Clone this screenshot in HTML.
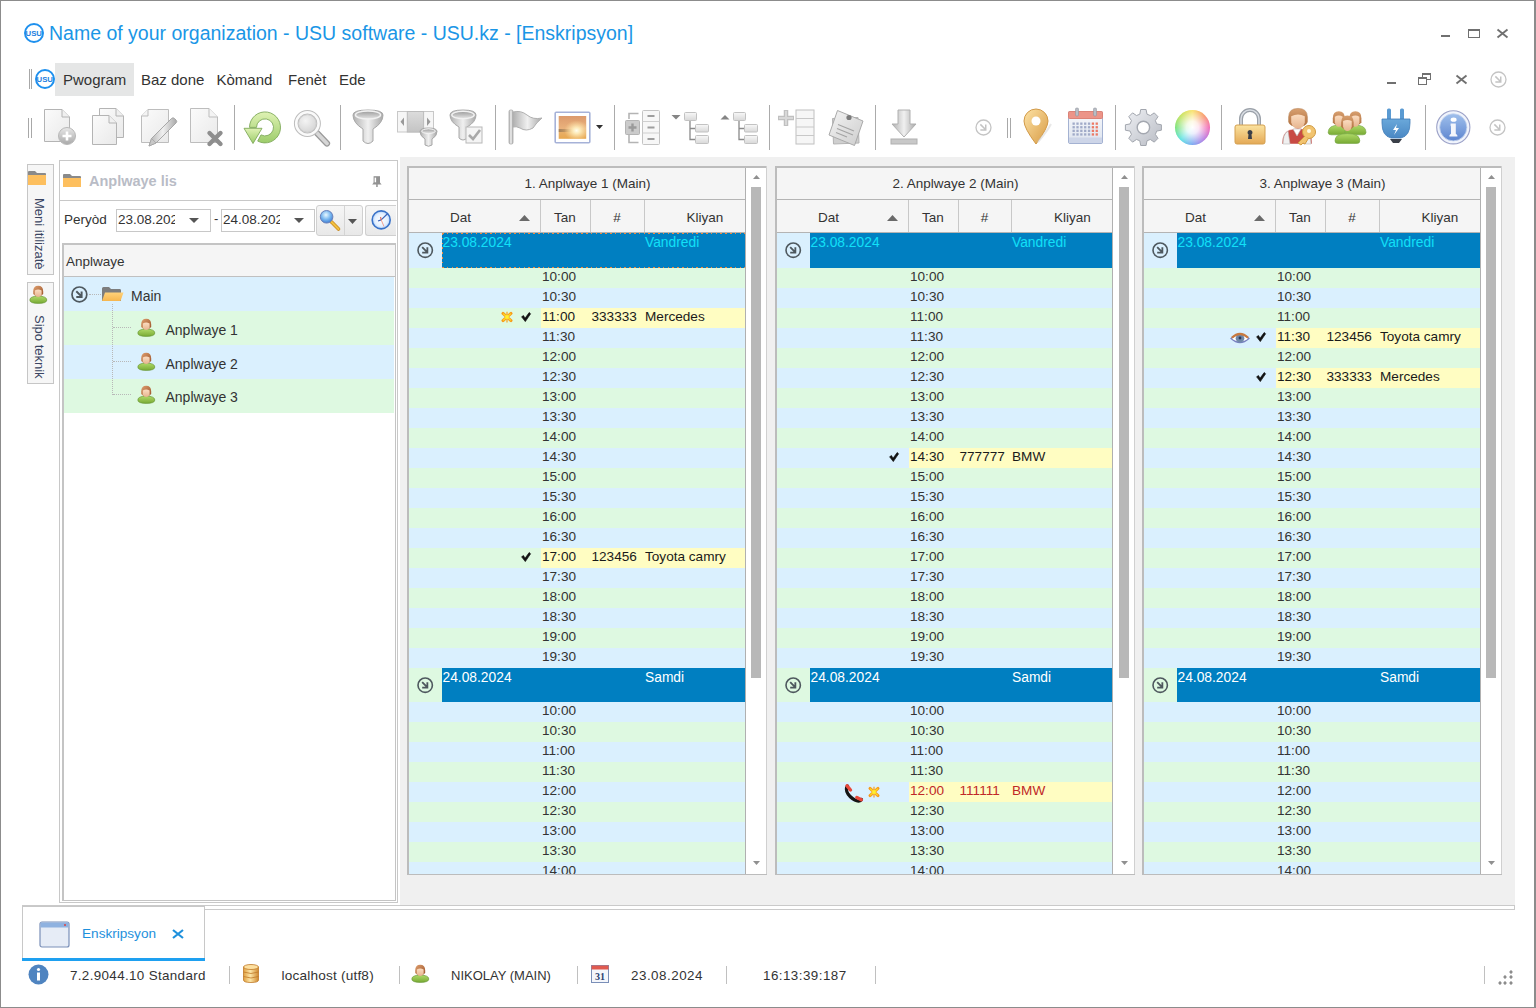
<!DOCTYPE html><html><head><meta charset="utf-8"><style>
*{box-sizing:border-box;margin:0;padding:0}
html,body{width:1536px;height:1008px;overflow:hidden;background:#fff;font-family:"Liberation Sans",sans-serif;color:#333}
.a{position:absolute}
.t{position:absolute;white-space:nowrap;line-height:1}
svg{position:absolute;overflow:visible}
</style></head><body><div class="a" style="left:0;top:0;width:1536px;height:1008px;border:1px solid #8c8c8c;border-right:2px solid #8c8c8c"></div>
<svg style="left:23.8px;top:22.5px" width="20" height="20" viewBox="0 0 20 20"><circle cx="10" cy="10" r="9" fill="none" stroke="#1e90ee" stroke-width="2"/><text x="1.6" y="12.6" font-size="7.2" font-weight="bold" textLength="16.4" lengthAdjust="spacingAndGlyphs" fill="#1e80e0" font-family="Liberation Sans">USU</text></svg>
<div class="t" style="left:49px;top:24px;font-size:19.5px;letter-spacing:0px;color:#1a96e6">Name of your organization - USU software - USU.kz - [Enskripsyon]</div>
<div class="a" style="left:1441px;top:35px;width:9px;height:2px;background:#707070"></div>
<div class="a" style="left:1468px;top:29px;width:12px;height:9px;border:1px solid #707070;border-top-width:2px"></div>
<svg style="left:1497px;top:29px" width="11" height="9" viewBox="0 0 11 9"><path d="M0.5 0.5L10.5 8.5M10.5 0.5L0.5 8.5" stroke="#707070" stroke-width="1.9"/></svg>
<div class="a" style="left:29px;top:69px;width:1px;height:20px;background:#a8a8a8"></div>
<div class="a" style="left:31px;top:69px;width:1px;height:20px;background:#a8a8a8"></div>
<div class="a" style="left:55px;top:63px;width:79px;height:33px;background:#e5e6e6"></div>
<svg style="left:35px;top:69px" width="20" height="20" viewBox="0 0 20 20"><circle cx="10" cy="10" r="9" fill="none" stroke="#1e90ee" stroke-width="2"/><text x="1.6" y="12.6" font-size="7.2" font-weight="bold" textLength="16.4" lengthAdjust="spacingAndGlyphs" fill="#1e80e0" font-family="Liberation Sans">USU</text></svg>
<div class="t" style="left:63px;top:72px;font-size:15px;color:#333">Pwogram</div>
<div class="t" style="left:141px;top:72px;font-size:15px;color:#333">Baz done</div>
<div class="t" style="left:216.5px;top:72px;font-size:15px;color:#333">Kòmand</div>
<div class="t" style="left:288px;top:72px;font-size:15px;color:#333">Fenèt</div>
<div class="t" style="left:339px;top:72px;font-size:15px;color:#333">Ede</div>
<div class="a" style="left:1387px;top:82px;width:9px;height:2px;background:#707070"></div>
<svg style="left:1418px;top:73px" width="14" height="12" viewBox="0 0 14 12"><rect x="4.5" y="0.5" width="8" height="6" fill="#fff" stroke="#707070" stroke-width="1"/><rect x="4.5" y="0.5" width="8" height="1.5" fill="#707070"/><rect x="0.5" y="4.5" width="8" height="7" fill="#fff" stroke="#707070" stroke-width="1"/><rect x="0.5" y="4.5" width="8" height="1.5" fill="#707070"/></svg>
<svg style="left:1456px;top:75px" width="11" height="9" viewBox="0 0 11 9"><path d="M0.5 0.5L10.5 8.5M10.5 0.5L0.5 8.5" stroke="#707070" stroke-width="1.9"/></svg>
<svg style="left:1488.5px;top:70.0px" width="19.0" height="19.0" viewBox="-9.5 -9.5 19.0 19.0"><circle cx="0" cy="0" r="7.5" fill="none" stroke="#c4c4c4" stroke-width="1.3"/><path d="M-3.15 -3.15L2.03 2.03M2.25 -3.00V2.55H-3.15" fill="none" stroke="#c4c4c4" stroke-width="1.49"/></svg>
<div class="a" style="left:28px;top:118px;width:1px;height:20px;background:#a8a8a8"></div>
<div class="a" style="left:31px;top:118px;width:1px;height:20px;background:#a8a8a8"></div>
<div class="a" style="left:234px;top:105px;width:1px;height:45px;background:#ababab"></div>
<div class="a" style="left:340px;top:105px;width:1px;height:45px;background:#ababab"></div>
<div class="a" style="left:495px;top:105px;width:1px;height:45px;background:#ababab"></div>
<div class="a" style="left:614px;top:105px;width:1px;height:45px;background:#ababab"></div>
<div class="a" style="left:769px;top:105px;width:1px;height:45px;background:#ababab"></div>
<div class="a" style="left:875px;top:105px;width:1px;height:45px;background:#ababab"></div>
<div class="a" style="left:1115px;top:105px;width:1px;height:45px;background:#ababab"></div>
<div class="a" style="left:1221px;top:105px;width:1px;height:45px;background:#ababab"></div>
<div class="a" style="left:1425px;top:105px;width:1px;height:45px;background:#ababab"></div>
<svg width="0" height="0" style="position:absolute"><defs>
<linearGradient id="gpage" x1="0" y1="0" x2="1" y2="1"><stop offset="0" stop-color="#fbfbfb"/><stop offset="1" stop-color="#e9e9e9"/></linearGradient>
<linearGradient id="ggray" x1="0" y1="0" x2="0" y2="1"><stop offset="0" stop-color="#e8e8e8"/><stop offset="1" stop-color="#a9a9a9"/></linearGradient>
<linearGradient id="ggray2" x1="0" y1="0" x2="1" y2="0"><stop offset="0" stop-color="#b0b0b0"/><stop offset="0.5" stop-color="#f0f0f0"/><stop offset="1" stop-color="#a8a8a8"/></linearGradient>
<linearGradient id="ggreen" x1="0" y1="0" x2="0" y2="1"><stop offset="0" stop-color="#dff2b4"/><stop offset="1" stop-color="#9ccc6a"/></linearGradient>
<linearGradient id="gsun" x1="0" y1="0" x2="0" y2="1"><stop offset="0" stop-color="#d9905a"/><stop offset="0.6" stop-color="#f5c48a"/><stop offset="1" stop-color="#b88a5a"/></linearGradient>
<radialGradient id="gsunc" cx="0.55" cy="0.7" r="0.35"><stop offset="0" stop-color="#fffbe8"/><stop offset="1" stop-color="#fffbe8" stop-opacity="0"/></radialGradient>
<linearGradient id="gpin" x1="0" y1="0" x2="1" y2="1"><stop offset="0" stop-color="#fde3a6"/><stop offset="1" stop-color="#d89b45"/></linearGradient>
<linearGradient id="ggear" x1="0" y1="0" x2="1" y2="1"><stop offset="0" stop-color="#eef0f4"/><stop offset="1" stop-color="#b9bcc4"/></linearGradient>
<linearGradient id="glock" x1="0" y1="0" x2="0" y2="1"><stop offset="0" stop-color="#fbe3a0"/><stop offset="1" stop-color="#e4a956"/></linearGradient>
<linearGradient id="ginfo" x1="0" y1="0" x2="0" y2="1"><stop offset="0" stop-color="#a0c0ec"/><stop offset="1" stop-color="#5e86d0"/></linearGradient>
<linearGradient id="gskin" x1="0" y1="0" x2="0" y2="1"><stop offset="0" stop-color="#fbdcc0"/><stop offset="1" stop-color="#e6b48e"/></linearGradient>
<linearGradient id="gshirt" x1="0" y1="0" x2="0" y2="1"><stop offset="0" stop-color="#b0da68"/><stop offset="1" stop-color="#78aa34"/></linearGradient>
<linearGradient id="gcal" x1="0" y1="0" x2="0" y2="1"><stop offset="0" stop-color="#f8f9fc"/><stop offset="1" stop-color="#dde3ee"/></linearGradient>
<linearGradient id="gplug" x1="0" y1="0" x2="0" y2="1"><stop offset="0" stop-color="#6aa8da"/><stop offset="1" stop-color="#4a88c4"/></linearGradient>
<linearGradient id="gfold" x1="0" y1="0" x2="0" y2="1"><stop offset="0" stop-color="#ffd27a"/><stop offset="1" stop-color="#f6b64e"/></linearGradient>
<linearGradient id="gbox" x1="0" y1="0" x2="0" y2="1"><stop offset="0" stop-color="#f8f8f8"/><stop offset="1" stop-color="#d8d8d8"/></linearGradient>
<linearGradient id="gnote" x1="0" y1="0" x2="1" y2="1"><stop offset="0" stop-color="#f4f4f4"/><stop offset="1" stop-color="#cdcdcd"/></linearGradient>
<linearGradient id="ghair" x1="0" y1="0" x2="1" y2="1"><stop offset="0" stop-color="#e0a070"/><stop offset="1" stop-color="#9a5228"/></linearGradient>
<radialGradient id="glens" cx="0.4" cy="0.35" r="0.7"><stop offset="0" stop-color="#f4f4f4"/><stop offset="1" stop-color="#d4d4d4"/></radialGradient>
<linearGradient id="gcup" x1="0" y1="0" x2="0" y2="1"><stop offset="0" stop-color="#9c9c9c"/><stop offset="1" stop-color="#e6e6e6"/></linearGradient><linearGradient id="gcol" x1="0" y1="0" x2="0" y2="1"><stop offset="0" stop-color="#dcdcdc"/><stop offset="1" stop-color="#c4c4c4"/></linearGradient>
<linearGradient id="ghair2" x1="0" y1="0" x2="0" y2="1"><stop offset="0" stop-color="#d8a070"/><stop offset="1" stop-color="#b07040"/></linearGradient>
</defs></svg>
<svg style="left:43px;top:108px" width="34" height="38" viewBox="0 0 34 38"><path d="M1.5 1.5H19L26.5 9V33.5H1.5Z" fill="url(#gpage)" stroke="#b4b4b4" stroke-width="1"/><path d="M19 1.5V9H26.5" fill="#f0f0f0" stroke="#b4b4b4" stroke-width="1"/><circle cx="24" cy="28" r="8.5" fill="url(#ggray)" stroke="#b8b8b8"/><path d="M24 23.5V32.5M19.5 28H28.5" stroke="#fff" stroke-width="2.6"/></svg>
<svg style="left:91px;top:108px" width="34" height="38" viewBox="0 0 34 38"><path d="M8.5 0.5H25L32.5 8V29.5H8.5Z" fill="url(#gpage)" stroke="#b4b4b4" stroke-width="1"/><path d="M25 0.5V8H32.5" fill="#f0f0f0" stroke="#b4b4b4" stroke-width="1"/><path d="M1.5 7.5H18L25.5 15V36.5H1.5Z" fill="url(#gpage)" stroke="#b4b4b4" stroke-width="1"/><path d="M18 7.5V15H25.5" fill="#f0f0f0" stroke="#b4b4b4" stroke-width="1"/></svg>
<svg style="left:140px;top:108px" width="36" height="40" viewBox="0 0 36 40"><path d="M1.5 8L8 1.5H28.5V34.5H1.5Z" fill="url(#gpage)" stroke="#bdbdbd" stroke-width="1"/><path d="M8 1.5V8H1.5" fill="#f4f4f4" stroke="#bdbdbd" stroke-width="1"/><path d="M9 38L11.5 30.5L31.5 10.5Q33 9 34.5 10.5L36 12Q37.5 13.5 36 15L16 35Z" fill="url(#ggray2)" stroke="#a0a0a0" stroke-width="0.9"/><path d="M9 38L11.5 30.5L16 35Z" fill="#c8c8c8" stroke="#a0a0a0" stroke-width="0.7"/></svg>
<svg style="left:189px;top:107px" width="36" height="42" viewBox="0 0 36 42"><path d="M1.5 1.5H20L28.5 10V35.5H1.5Z" fill="url(#gpage)" stroke="#bdbdbd" stroke-width="1"/><path d="M20 1.5V10H28.5" fill="#f4f4f4" stroke="#bdbdbd" stroke-width="1"/><path d="M20.5 26L31.5 37M31.5 26L20.5 37" stroke="#8e8e8e" stroke-width="4.4" stroke-linecap="round"/></svg>
<svg style="left:243px;top:110px" width="40" height="36" viewBox="0 0 40 36"><path d="M6.5 17.4A15.5 15.5 0 1 1 14.7 31.1L18 24.9A8.5 8.5 0 1 0 13.5 17.4Z" fill="url(#ggreen)" stroke="#7fa95a" stroke-width="0.9"/><path d="M1 18.3L19 18.3L10 33.5Z" fill="url(#ggreen)" stroke="#7fa95a" stroke-width="0.9"/></svg>
<svg style="left:293px;top:108px" width="38" height="40" viewBox="0 0 38 40"><path d="M23 24L34 35.5" stroke="#9a9a9a" stroke-width="6.2" stroke-linecap="round"/><path d="M23 24L34 35.5" stroke="#d6d6d6" stroke-width="3.8" stroke-linecap="round"/><circle cx="14.4" cy="15.5" r="11.2" fill="none" stroke="#bdbdbd" stroke-width="4.6"/><circle cx="14.4" cy="15.5" r="11.2" fill="none" stroke="#fafafa" stroke-width="2.6"/><circle cx="14.4" cy="15.5" r="8.9" fill="url(#glens)" stroke="#c4c4c4" stroke-width="0.8"/></svg>
<svg style="left:352px;top:108px" width="34" height="38" viewBox="0 0 34 38"><path d="M1 7Q1 2 16 2Q31 2 31 7Q31 15 21 21V33Q16 38 11 33V21Q1 15 1 7Z" fill="url(#ggray2)" stroke="#a8a8a8"/><ellipse cx="16" cy="7" rx="12.6" ry="4" fill="url(#gcup)" stroke="#f2f2f2" stroke-width="1.4"/></svg>
<svg style="left:396px;top:108px" width="44" height="40" viewBox="0 0 44 40"><rect x="1.5" y="3.5" width="36" height="20.5" fill="#f6f6f6" stroke="#c8c8c8"/><rect x="11.3" y="3.5" width="16.3" height="20.5" fill="url(#gcol)" stroke="#bcbcbc"/><path d="M8 9.5L4.5 13.8L8 18Z M31 9.5L34.5 13.8L31 18Z" fill="#9a9a9a"/><path d="M24 23.5Q24 20 32.5 20Q41 20 41 23.5Q41 28 36 31V37Q32.5 39.5 29 37V31Q24 28 24 23.5Z" fill="url(#ggray2)" stroke="#a8a8a8"/><ellipse cx="32.5" cy="23.2" rx="6.8" ry="2.3" fill="url(#gcup)" stroke="#f2f2f2" stroke-width="1"/></svg>
<svg style="left:449px;top:108px" width="36" height="38" viewBox="0 0 36 38"><path d="M1 7Q1 2 14 2Q27 2 27 7Q27 14 18 19V30Q14 34 10 30V19Q1 14 1 7Z" fill="url(#ggray2)" stroke="#a8a8a8"/><ellipse cx="14" cy="7" rx="11.2" ry="3.6" fill="url(#gcup)" stroke="#f2f2f2" stroke-width="1.4"/><rect x="17" y="19" width="16" height="16" fill="#f4f4f4" stroke="#b8b8b8"/><path d="M20 27L24 31L31 22" fill="none" stroke="#a8a8a8" stroke-width="2.6"/></svg>
<svg style="left:507px;top:108px" width="37" height="38" viewBox="0 0 37 38"><rect x="2" y="2" width="4" height="34" rx="1.5" fill="url(#ggray2)" stroke="#a8a8a8" stroke-width="0.8"/><path d="M6 4Q14 2 20 7Q26 12 35 10Q29 15 26 20Q19 24 13 20Q9 18 6 19Z" fill="url(#ggray2)" stroke="#b0b0b0"/></svg>
<svg style="left:554px;top:111px" width="38" height="34" viewBox="0 0 38 34"><defs><linearGradient id="gsky" x1="0" y1="0" x2="0" y2="1"><stop offset="0" stop-color="#dc9a6c"/><stop offset="0.55" stop-color="#eab27c"/><stop offset="0.62" stop-color="#e8b070"/><stop offset="1" stop-color="#e8a850"/></linearGradient><radialGradient id="gsun2" cx="0.65" cy="0.64" r="0.45"><stop offset="0" stop-color="#fffef0"/><stop offset="0.3" stop-color="#fff0c0" stop-opacity="0.9"/><stop offset="1" stop-color="#ffe0a0" stop-opacity="0"/></radialGradient><linearGradient id="ghor" x1="0" y1="0" x2="1" y2="0"><stop offset="0" stop-color="#6a5a4a" stop-opacity="0.55"/><stop offset="0.6" stop-color="#8a6a4a" stop-opacity="0"/></linearGradient></defs><rect x="1.2" y="1.2" width="34.6" height="30.6" rx="1" fill="#fff" stroke="#a6b2d8" stroke-width="1.6"/><rect x="4.7" y="5" width="27.5" height="22.8" fill="url(#gsky)"/><rect x="4.7" y="18" width="27.5" height="3" fill="url(#ghor)"/><rect x="4.7" y="5" width="27.5" height="22.8" fill="url(#gsun2)"/></svg>
<svg style="left:596px;top:125px" width="7" height="4" viewBox="0 0 7 4"><path d="M0 0H7L3.5 4Z" fill="#303030"/></svg>
<svg style="left:624px;top:108px" width="38" height="38" viewBox="0 0 38 38"><path d="M14.5 5.5H5V11M5 26V34.5H14.5" fill="none" stroke="#b4b4b4" stroke-width="1.6"/><rect x="1.5" y="12.5" width="14" height="14" rx="1" fill="#cbcbcb" stroke="#b4b4b4"/><path d="M8.5 15.5V23.5M4.5 19.5H12.5" stroke="#9a9a9a" stroke-width="2.4"/><rect x="18.5" y="2.5" width="17" height="34" rx="1" fill="#f7f7f7" stroke="#c4c4c4"/><path d="M18.5 13.5H35.5M18.5 25H35.5" stroke="#cfcfcf"/><path d="M23.5 8H30.5M23.5 19.5H30.5M23.5 31H30.5" stroke="#9e9e9e" stroke-width="2.2"/></svg>
<svg style="left:670px;top:108px" width="40" height="38" viewBox="0 0 40 38"><path d="M1.5 7H10.5L6 11.5Z" fill="#858585"/><path d="M20 12.5V31.5H25.5M20 20.5H25.5" fill="none" stroke="#8a8a8a" stroke-width="1.3"/><rect x="14.5" y="4.5" width="12" height="8" rx="1" fill="url(#gbox)" stroke="#c2c2c2"/><rect x="25.5" y="16.5" width="13" height="7.5" rx="1" fill="url(#gbox)" stroke="#c2c2c2"/><rect x="25.5" y="27.5" width="13" height="8" rx="1" fill="url(#gbox)" stroke="#c2c2c2"/></svg>
<svg style="left:719px;top:108px" width="40" height="38" viewBox="0 0 40 38"><path d="M1.5 11.5H10.5L6 7Z" fill="#858585"/><path d="M20 12.5V31.5H25.5M20 20.5H25.5" fill="none" stroke="#8a8a8a" stroke-width="1.3"/><rect x="14.5" y="4.5" width="12" height="8" rx="1" fill="url(#gbox)" stroke="#c2c2c2"/><rect x="25.5" y="16.5" width="13" height="7.5" rx="1" fill="url(#gbox)" stroke="#c2c2c2"/><rect x="25.5" y="27.5" width="13" height="8" rx="1" fill="url(#gbox)" stroke="#c2c2c2"/></svg>
<svg style="left:778px;top:108px" width="38" height="38" viewBox="0 0 38 38"><path d="M8 2V18M0 10H16" stroke="#c0c0c0" stroke-width="4.5"/><path d="M8 3V17M1 10H15" stroke="#d8d8d8" stroke-width="2"/><rect x="18" y="2" width="18" height="34" fill="#f6f6f6" stroke="#c0c0c0"/><path d="M18 10.5H36M18 19H36M18 27.5H36" stroke="#c8c8c8"/></svg>
<svg style="left:828px;top:108px" width="37" height="38" viewBox="0 0 37 38"><path d="M4.5 10.5L30 9.5L31 35L5.5 36Z" fill="#cfcfcf" stroke="#b4b4b4"/><path d="M9.5 2.5L35 13L26.5 37.5L1 27Z" fill="url(#gnote)" stroke="#aaaaaa"/><path d="M10 16.5L26 23M9 20.5L25 27M8 24.5L19 29" stroke="#a4a4a4" stroke-width="1.1"/><circle cx="21" cy="9.5" r="2.6" fill="#7a7a7a"/></svg>
<svg style="left:890px;top:108px" width="28" height="38" viewBox="0 0 28 38"><path d="M8 2H20V16H26L14 29L2 16H8Z" fill="url(#ggray2)" stroke="#b0b0b0"/><rect x="1" y="31" width="26" height="5" fill="#c8c8c8" stroke="#b0b0b0"/></svg>
<svg style="left:973.5px;top:118.0px" width="19.0" height="19.0" viewBox="-9.5 -9.5 19.0 19.0"><circle cx="0" cy="0" r="7.5" fill="none" stroke="#c4c4c4" stroke-width="1.3"/><path d="M-3.15 -3.15L2.03 2.03M2.25 -3.00V2.55H-3.15" fill="none" stroke="#c4c4c4" stroke-width="1.49"/></svg>
<div class="a" style="left:1007px;top:118px;width:1px;height:20px;background:#a8a8a8"></div>
<div class="a" style="left:1010px;top:118px;width:1px;height:20px;background:#a8a8a8"></div>
<svg style="left:1022px;top:108px" width="34" height="38" viewBox="0 0 34 38"><path d="M14 36Q2 20 2 13A12 12 0 0 1 26 13Q26 20 14 36Z" fill="url(#gpin)" stroke="#d29a48"/><circle cx="14" cy="13" r="4.5" fill="#fff"/><path d="M16 34Q26 22 29 16" fill="none" stroke="#d8d8d8" stroke-width="2" opacity="0.6"/></svg>
<svg style="left:1067px;top:107px" width="38" height="40" viewBox="0 0 38 40"><rect x="1.5" y="4.5" width="34" height="32" rx="1.5" fill="url(#gcal)" stroke="#a4b2d2"/><rect x="2" y="30.5" width="33" height="5.5" fill="#cdd5e8"/><rect x="1.5" y="4.5" width="34" height="7" rx="1" fill="#ec9488" stroke="#dc8276"/><rect x="8.5" y="1" width="3" height="8" rx="1" fill="#b8bcc4" stroke="#8a8e96" stroke-width="0.5"/><rect x="26.5" y="1" width="3" height="8" rx="1" fill="#b8bcc4" stroke="#8a8e96" stroke-width="0.5"/><rect x="5.50" y="15.50" width="2.3" height="2.3" fill="#a0aac8"/><rect x="9.35" y="15.50" width="2.3" height="2.3" fill="#a0aac8"/><rect x="13.20" y="15.50" width="2.3" height="2.3" fill="#a0aac8"/><rect x="17.05" y="15.50" width="2.3" height="2.3" fill="#a0aac8"/><rect x="20.90" y="15.50" width="2.3" height="2.3" fill="#a0aac8"/><rect x="24.75" y="15.50" width="2.3" height="2.3" fill="#ec7a66"/><rect x="28.60" y="15.50" width="2.3" height="2.3" fill="#ec7a66"/><rect x="5.50" y="19.10" width="2.3" height="2.3" fill="#a0aac8"/><rect x="9.35" y="19.10" width="2.3" height="2.3" fill="#a0aac8"/><rect x="13.20" y="19.10" width="2.3" height="2.3" fill="#a0aac8"/><rect x="17.05" y="19.10" width="2.3" height="2.3" fill="#a0aac8"/><rect x="20.90" y="19.10" width="2.3" height="2.3" fill="#a0aac8"/><rect x="24.75" y="19.10" width="2.3" height="2.3" fill="#ec7a66"/><rect x="28.60" y="19.10" width="2.3" height="2.3" fill="#ec7a66"/><rect x="5.50" y="22.70" width="2.3" height="2.3" fill="#a0aac8"/><rect x="9.35" y="22.70" width="2.3" height="2.3" fill="#a0aac8"/><rect x="13.20" y="22.70" width="2.3" height="2.3" fill="#a0aac8"/><rect x="17.05" y="22.70" width="2.3" height="2.3" fill="#a0aac8"/><rect x="20.90" y="22.70" width="2.3" height="2.3" fill="#a0aac8"/><rect x="24.75" y="22.70" width="2.3" height="2.3" fill="#ec7a66"/><rect x="28.60" y="22.70" width="2.3" height="2.3" fill="#ec7a66"/><rect x="5.50" y="26.30" width="2.3" height="2.3" fill="#a0aac8"/><rect x="9.35" y="26.30" width="2.3" height="2.3" fill="#a0aac8"/><rect x="13.20" y="26.30" width="2.3" height="2.3" fill="#a0aac8"/><rect x="17.05" y="26.30" width="2.3" height="2.3" fill="#a0aac8"/><rect x="20.90" y="26.30" width="2.3" height="2.3" fill="#a0aac8"/><rect x="24.75" y="26.30" width="2.3" height="2.3" fill="#ec7a66"/><rect x="28.60" y="26.30" width="2.3" height="2.3" fill="#ec7a66"/></svg>
<svg style="left:1124px;top:108px" width="40" height="40" viewBox="0 0 40 40"><path d="M32.73 15.93L37.40 16.81L37.40 22.19L32.73 23.07L31.35 26.40L34.03 30.33L30.23 34.13L26.30 31.45L22.97 32.83L22.09 37.50L16.71 37.50L15.83 32.83L12.50 31.45L8.57 34.13L4.77 30.33L7.45 26.40L6.07 23.07L1.40 22.19L1.40 16.81L6.07 15.93L7.45 12.60L4.77 8.67L8.57 4.87L12.50 7.55L15.83 6.17L16.71 1.50L22.09 1.50L22.97 6.17L26.30 7.55L30.23 4.87L34.03 8.67L31.35 12.60Z" fill="url(#ggear)" stroke="#a2a6ae" stroke-linejoin="round"/><circle cx="19.4" cy="19.5" r="6.2" fill="#fff" stroke="#a4a8b0" stroke-width="1.4"/></svg>
<div class="a" style="left:1175px;top:110px;width:35px;height:35px;border-radius:50%;background:conic-gradient(from 0deg,#f8e060,#f89060,#f060b0,#b070e0,#70a0f0,#50e0e0,#70e070,#c0e050,#f8e060)"></div>
<div class="a" style="left:1175px;top:110px;width:35px;height:35px;border-radius:50%;background:radial-gradient(circle,#fff 0%,rgba(255,255,255,0.85) 25%,rgba(255,255,255,0) 75%)"></div>
<svg style="left:1234px;top:108px" width="32" height="38" viewBox="0 0 32 38"><path d="M7 18V11A9 9 0 0 1 25 11V18" fill="none" stroke="#9aa0a8" stroke-width="4"/><path d="M7 18V11A9 9 0 0 1 25 11V18" fill="none" stroke="#d8dce2" stroke-width="1.5"/><rect x="1" y="17" width="30" height="19" rx="2" fill="url(#glock)" stroke="#d4a050"/><path d="M16 22A2.5 2.5 0 0 1 17.5 26.5L18 31H14L14.5 26.5A2.5 2.5 0 0 1 16 22Z" fill="#3a3f48"/></svg>
<svg style="left:1281px;top:108px" width="37" height="38" viewBox="0 0 37 38"><path d="M1 36Q1 25 8 22L17 20L26 22Q31 25 31 34V36Z" fill="#c84a44" stroke="#fff" stroke-width="0.5"/><path d="M2 36Q2 26 7 23L9 36Z M30 36Q30 26 25 23L23 36Z" fill="#f0f0f0" stroke="#bbb" stroke-width="0.6"/><path d="M12 21L16 28L20 21Z" fill="#fff" stroke="#bbb" stroke-width="0.6"/><path d="M7.6 9Q7.6 0.4 17 0.4Q26.4 0.4 26.4 9V14Q25 18.5 17 18.5Q9 18.5 7.6 14Z" fill="url(#ghair2)" stroke="#b07848" stroke-width="0.5"/><path d="M10.2 8.2Q17 4.6 23.8 8.2V14.6Q22.4 20.6 17 20.6Q11.6 20.6 10.2 14.6Z" fill="url(#gskin)"/><circle cx="28" cy="24" r="6.5" fill="#f2c470" stroke="#d09a40"/><circle cx="28" cy="23" r="2" fill="#fff8e0"/><path d="M24 28L17 35L20 37L22 35L24 36L27 31" fill="#f2c470" stroke="#d09a40"/></svg>
<svg style="left:1327px;top:108px" width="40" height="38" viewBox="0 0 40 38"><path d="M1.200000000000001 24.3Q1.200000000000001 17.2 11.8 17.2Q22.4 17.2 22.4 24.3Q22.4 26.8 19.4 26.8H4.200000000000001Q1.200000000000001 26.8 1.200000000000001 24.3Z" fill="url(#gshirt)" stroke="#78a848" stroke-width="0.7"/><path d="M5.800000000000001 10.2Q5.800000000000001 3.2 11.8 3.2Q17.8 3.2 17.8 10.2V14.2Q16.3 17.2 11.8 17.2Q7.300000000000001 17.2 5.800000000000001 14.2Z" fill="url(#ghair2)"/><path d="M7.800000000000001 8.7Q11.8 6.4 15.8 8.7V14.2Q14.8 18.7 11.8 18.7Q8.8 18.7 7.800000000000001 14.2Z" fill="url(#gskin)"/><path d="M17.799999999999997 24.3Q17.799999999999997 17.2 28.4 17.2Q39.0 17.2 39.0 24.3Q39.0 26.8 36.0 26.8H20.799999999999997Q17.799999999999997 26.8 17.799999999999997 24.3Z" fill="url(#gshirt)" stroke="#78a848" stroke-width="0.7"/><path d="M22.4 10.2Q22.4 3.2 28.4 3.2Q34.4 3.2 34.4 10.2V14.2Q32.9 17.2 28.4 17.2Q23.9 17.2 22.4 14.2Z" fill="url(#ghair2)"/><path d="M24.4 8.7Q28.4 6.4 32.4 8.7V14.2Q31.4 18.7 28.4 18.7Q25.4 18.7 24.4 14.2Z" fill="url(#gskin)"/><path d="M7.999999999999998 32.9Q7.999999999999998 25.6 20.4 25.6Q32.8 25.6 32.8 32.9Q32.8 35.4 29.799999999999997 35.4H10.999999999999998Q7.999999999999998 35.4 7.999999999999998 32.9Z" fill="url(#gshirt)" stroke="#78a848" stroke-width="0.7"/><path d="M14.099999999999998 14.6Q14.099999999999998 7.6 20.4 7.6Q26.7 7.6 26.7 14.6V18.6Q25.2 21.6 20.4 21.6Q15.599999999999998 21.6 14.099999999999998 18.6Z" fill="url(#ghair2)"/><path d="M16.099999999999998 13.1Q20.4 10.8 24.7 13.1V18.6Q23.7 23.1 20.4 23.1Q17.099999999999998 23.1 16.099999999999998 18.6Z" fill="url(#gskin)"/></svg>
<svg style="left:1381px;top:108px" width="30" height="38" viewBox="0 0 30 38"><rect x="6" y="0.5" width="4" height="12" rx="1.5" fill="#5a9ad2"/><rect x="19" y="0.5" width="4" height="12" rx="1.5" fill="#5a9ad2"/><path d="M1 11H29V15Q29 28 20 30H10Q1 28 1 15Z" fill="url(#gplug)" stroke="#3f7cb8" stroke-width="0.8"/><path d="M16 16L12 22H15L13 27L18 20H15Z" fill="#fff"/><path d="M9 31H21L18 35H12Z" fill="#3a3f48"/></svg>
<svg style="left:1435px;top:108px" width="37" height="38" viewBox="0 0 37 38"><circle cx="18.3" cy="19.3" r="16.6" fill="#f0f4fc" stroke="#9ca2c8" stroke-width="1.1"/><circle cx="18.3" cy="19.3" r="13.6" fill="url(#ginfo)" stroke="#c8d4ee" stroke-width="0.8"/><ellipse cx="18.6" cy="11.7" rx="3" ry="2.1" fill="#fff"/><path d="M15.6 15.6H20.8V25.8Q21.8 26.4 22.4 27.6V28.6H14.4V27.6Q15 26.4 16 25.8V18.6Q15.4 18 15.6 15.6Z" fill="#f4f6fb"/></svg>
<svg style="left:1488.0px;top:118.0px" width="19.0" height="19.0" viewBox="-9.5 -9.5 19.0 19.0"><circle cx="0" cy="0" r="7.5" fill="none" stroke="#c4c4c4" stroke-width="1.3"/><path d="M-3.15 -3.15L2.03 2.03M2.25 -3.00V2.55H-3.15" fill="none" stroke="#c4c4c4" stroke-width="1.49"/></svg>
<div class="a" style="left:27px;top:164px;width:27px;height:111px;border:1px solid #c6c6c6;background:#f6f6f6"></div>
<svg style="left:28px;top:171px" width="18" height="14" viewBox="0 0 18 14"><path d="M0 1Q0 0 1 0H7L9 2H17Q18 2 18 3V4H0Z" fill="#8a8a8a"/><rect x="0" y="4" width="18" height="10" fill="#fdbf5e"/></svg>
<div class="t" style="left:33px;top:197.5px;font-size:13px;color:#3a4562;transform-origin:0 0;transform:translate(13px,0) rotate(90deg)">Meni itilizatè</div>
<div class="a" style="left:27px;top:282px;width:27px;height:102px;border:1px solid #c6c6c6;background:#f6f6f6"></div>
<svg style="left:29px;top:285px" width="19.0" height="19.0" viewBox="0 0 19.0 19.0"><g transform="scale(1.0)"><path d="M0.8 15Q0.8 11.3 9.2 11Q17.8 11.3 17.8 15Q17.8 18.4 9.3 18.4Q0.8 18.4 0.8 15Z" fill="url(#gshirt)" stroke="#5e8e2c" stroke-width="0.6"/><path d="M4.2 6.5Q4.2 0.8 9.2 0.8Q14.2 0.8 14.2 6.5V9Q12.5 11.2 9.2 11.2Q6 11.2 4.2 9Z" fill="url(#ghair)"/><path d="M5.8 5.6Q9.2 3.6 12.6 5.6V9.4Q11.6 12 9.2 12Q6.8 12 5.8 9.4Z" fill="url(#gskin)"/></g></svg>
<div class="t" style="left:33px;top:315px;font-size:13px;color:#3a4562;transform-origin:0 0;transform:translate(13px,0) rotate(90deg)">Sipo teknik</div>
<div class="a" style="left:59px;top:160px;width:339px;height:743px;border:1px solid #c8c8c8;background:#fff"></div>
<svg style="left:63px;top:174px" width="18" height="13" viewBox="0 0 18 13"><path d="M0 1Q0 0 1 0H7L9 2H17Q18 2 18 3V4H0Z" fill="#8a8a8a"/><rect x="0" y="4" width="18" height="9" fill="#fdbf5e"/></svg>
<div class="t" style="left:89px;top:174px;font-size:14.5px;font-weight:bold;color:#b9bcc6">Anplwaye lis</div>
<svg style="left:371px;top:176px" width="11" height="12" viewBox="0 0 11 12"><rect x="2.6" y="0.2" width="6.4" height="7" fill="#929292"/><rect x="3.6" y="1.6" width="1.5" height="5" fill="#fff"/><path d="M1.2 8.4H10.6L9 6.6H2.8Z" fill="#929292"/><rect x="5.2" y="8" width="1.5" height="3" fill="#929292"/></svg>
<div class="a" style="left:60px;top:200px;width:337px;height:1px;background:#c8c8c8"></div>
<div class="t" style="left:64px;top:213px;font-size:13.5px;color:#333">Peryòd</div>
<div class="a" style="left:116px;top:209px;width:95px;height:23px;border:1px solid #c8c8c8;background:#fff"></div>
<div class="t" style="left:118px;top:213px;font-size:13.5px;color:#333;width:57px;overflow:hidden">23.08.2024</div>
<svg style="left:189px;top:218px" width="10" height="6" viewBox="0 0 10 6"><path d="M0 0H10L5 5Z" fill="#555"/></svg>
<div class="t" style="left:214px;top:212px;font-size:13px;color:#333">-</div>
<div class="a" style="left:221px;top:209px;width:94px;height:23px;border:1px solid #c8c8c8;background:#fff"></div>
<div class="t" style="left:223px;top:213px;font-size:13.5px;color:#333;width:57px;overflow:hidden">24.08.2024</div>
<svg style="left:294px;top:218px" width="10" height="6" viewBox="0 0 10 6"><path d="M0 0H10L5 5Z" fill="#555"/></svg>
<div class="a" style="left:316px;top:205px;width:47px;height:31px;border:1px solid #d0d0d0;border-radius:3px;background:linear-gradient(#f6f6f6,#e8e8e8)"></div>
<div class="a" style="left:344px;top:206px;width:1px;height:29px;background:#d4d4d4"></div>
<svg style="left:318px;top:209px" width="24" height="24" viewBox="0 0 24 24"><defs><radialGradient id="glensb" cx="0.45" cy="0.35" r="0.6"><stop offset="0" stop-color="#e8f8ff"/><stop offset="0.6" stop-color="#7ab8f0"/><stop offset="1" stop-color="#4a88d8"/></radialGradient></defs><path d="M13.6 13L20.5 20" stroke="#c88a20" stroke-width="3.6" stroke-linecap="round"/><path d="M13.6 13L20.5 20" stroke="#f2c040" stroke-width="2" stroke-linecap="round"/><circle cx="8.6" cy="7.8" r="6.3" fill="url(#glensb)" stroke="#6a80b8" stroke-width="1"/></svg>
<svg style="left:348px;top:219px" width="9" height="5" viewBox="0 0 9 5"><path d="M0 0H9L4.5 5Z" fill="#555"/></svg>
<div class="a" style="left:365px;top:205px;width:31px;height:31px;border:1px solid #d0d0d0;border-right:none;border-radius:3px 0 0 3px;background:linear-gradient(#f6f6f6,#e8e8e8)"></div>
<svg style="left:370px;top:209px" width="23" height="23" viewBox="0 0 23 23"><defs><radialGradient id="gclk" cx="0.5" cy="0.5" r="0.5"><stop offset="0" stop-color="#ffffff"/><stop offset="0.7" stop-color="#e4f0ff"/><stop offset="1" stop-color="#b0d0f8"/></radialGradient></defs><circle cx="11.2" cy="10.9" r="9" fill="url(#gclk)" stroke="#3a72c8" stroke-width="1.6"/><path d="M11.2 10.9L17.5 4.8" stroke="#3a62b8" stroke-width="1.2"/><path d="M11.2 10.9L8 12" stroke="#3a62b8" stroke-width="1.2"/><path d="M11.2 10.9L14 17.5" stroke="#f0a090" stroke-width="1"/><path d="M11.2 10.9L10.5 8" stroke="#e07060" stroke-width="1.2"/></svg>
<div class="a" style="left:62px;top:243px;width:334px;height:658px;border:2px solid #c4c4c4;border-right-width:1px;border-bottom-width:1px;background:#fff"></div>
<div class="a" style="left:64px;top:245px;width:331px;height:31px;background:#f5f5f5"></div>
<div class="a" style="left:64px;top:276px;width:331px;height:1px;background:#c0c0c0"></div>
<div class="t" style="left:66px;top:255px;font-size:13.5px;color:#333">Anplwaye</div>
<div class="a" style="left:64px;top:277px;width:330px;height:34px;background:#daf0fe"></div>
<div class="a" style="left:64px;top:311px;width:330px;height:34px;background:#def9e1"></div>
<div class="a" style="left:64px;top:345px;width:330px;height:34px;background:#daf0fe"></div>
<div class="a" style="left:64px;top:379px;width:330px;height:34px;background:#def9e1"></div>
<svg style="left:70.0px;top:285.0px" width="18.8" height="18.8" viewBox="-9.4 -9.4 18.8 18.8"><circle cx="0" cy="0" r="7.4" fill="none" stroke="#4e585e" stroke-width="1.7"/><path d="M-3.11 -3.11L2.00 2.00M2.22 -2.96V2.52H-3.11" fill="none" stroke="#4e585e" stroke-width="1.95"/></svg>
<div class="a" style="left:89px;top:294px;width:12px;border-top:1px dotted #b8b8b8"></div>
<svg style="left:102px;top:287px" width="22" height="15" viewBox="0 0 22 15"><path d="M0 1.5Q0 0 1.5 0H7L9 2H18Q19 2 19 3.5V14H0Z" fill="#7d7d7d"/><path d="M0 14L3 5.5H21.5L18.5 14Z" fill="url(#gfold)"/></svg>
<div class="t" style="left:131px;top:288.5px;font-size:14px;color:#333">Main</div>
<div class="a" style="left:112px;top:304px;height:91px;border-left:1px dotted #b8b8b8"></div>
<div class="a" style="left:113px;top:327px;width:18px;border-top:1px dotted #b8b8b8"></div>
<svg style="left:137px;top:318px" width="19.0" height="19.0" viewBox="0 0 19.0 19.0"><g transform="scale(1.0)"><path d="M0.8 15Q0.8 11.3 9.2 11Q17.8 11.3 17.8 15Q17.8 18.4 9.3 18.4Q0.8 18.4 0.8 15Z" fill="url(#gshirt)" stroke="#5e8e2c" stroke-width="0.6"/><path d="M4.2 6.5Q4.2 0.8 9.2 0.8Q14.2 0.8 14.2 6.5V9Q12.5 11.2 9.2 11.2Q6 11.2 4.2 9Z" fill="url(#ghair)"/><path d="M5.8 5.6Q9.2 3.6 12.6 5.6V9.4Q11.6 12 9.2 12Q6.8 12 5.8 9.4Z" fill="url(#gskin)"/></g></svg>
<div class="t" style="left:165.5px;top:323px;font-size:14px;color:#333">Anplwaye 1</div>
<div class="a" style="left:113px;top:361px;width:18px;border-top:1px dotted #b8b8b8"></div>
<svg style="left:137px;top:352px" width="19.0" height="19.0" viewBox="0 0 19.0 19.0"><g transform="scale(1.0)"><path d="M0.8 15Q0.8 11.3 9.2 11Q17.8 11.3 17.8 15Q17.8 18.4 9.3 18.4Q0.8 18.4 0.8 15Z" fill="url(#gshirt)" stroke="#5e8e2c" stroke-width="0.6"/><path d="M4.2 6.5Q4.2 0.8 9.2 0.8Q14.2 0.8 14.2 6.5V9Q12.5 11.2 9.2 11.2Q6 11.2 4.2 9Z" fill="url(#ghair)"/><path d="M5.8 5.6Q9.2 3.6 12.6 5.6V9.4Q11.6 12 9.2 12Q6.8 12 5.8 9.4Z" fill="url(#gskin)"/></g></svg>
<div class="t" style="left:165.5px;top:357px;font-size:14px;color:#333">Anplwaye 2</div>
<div class="a" style="left:113px;top:394px;width:18px;border-top:1px dotted #b8b8b8"></div>
<svg style="left:137px;top:385px" width="19.0" height="19.0" viewBox="0 0 19.0 19.0"><g transform="scale(1.0)"><path d="M0.8 15Q0.8 11.3 9.2 11Q17.8 11.3 17.8 15Q17.8 18.4 9.3 18.4Q0.8 18.4 0.8 15Z" fill="url(#gshirt)" stroke="#5e8e2c" stroke-width="0.6"/><path d="M4.2 6.5Q4.2 0.8 9.2 0.8Q14.2 0.8 14.2 6.5V9Q12.5 11.2 9.2 11.2Q6 11.2 4.2 9Z" fill="url(#ghair)"/><path d="M5.8 5.6Q9.2 3.6 12.6 5.6V9.4Q11.6 12 9.2 12Q6.8 12 5.8 9.4Z" fill="url(#gskin)"/></g></svg>
<div class="t" style="left:165.5px;top:390px;font-size:14px;color:#333">Anplwaye 3</div>
<div class="a" style="left:400px;top:157px;width:1115px;height:749px;background:#f0f0f0"></div>
<div class="a" style="left:22px;top:905px;width:1493px;height:1px;background:#cacaca"></div>
<div class="a" style="left:205px;top:909px;width:1310px;height:1px;background:#cacaca"></div>
<div class="a" style="left:1514px;top:905px;width:1px;height:5px;background:#cacaca"></div>
<div class="a" style="left:407px;top:166px;width:360px;height:709px;border:2px solid #bcbcbc;border-right:none;border-bottom:1px solid #bcbcbc;background:#fff"></div>
<div class="a" style="left:409px;top:168px;width:336px;height:31px;background:#f5f5f5"></div>
<div class="a" style="left:409px;top:199px;width:336px;height:1px;background:#b4b4b4"></div>
<div class="t" style="left:409px;top:177px;width:357px;text-align:center;font-size:13.5px;color:#333">1. Anplwaye 1 (Main)</div>
<div class="a" style="left:409px;top:200px;width:336px;height:32px;background:#f5f5f5"></div>
<div class="a" style="left:409px;top:232px;width:336px;height:1px;background:#b4b4b4"></div>
<div class="a" style="left:540px;top:200px;width:1px;height:32px;background:#c8c8c8"></div>
<div class="a" style="left:590px;top:200px;width:1px;height:32px;background:#c8c8c8"></div>
<div class="a" style="left:644px;top:200px;width:1px;height:32px;background:#c8c8c8"></div>
<div class="t" style="left:450px;top:211px;font-size:13.5px;color:#333">Dat</div>
<svg style="left:519px;top:215px" width="11" height="6" viewBox="0 0 11 6"><path d="M0 6H11L5.5 0Z" fill="#6a6a6a"/></svg>
<div class="t" style="left:540px;top:211px;width:50px;text-align:center;font-size:13.5px;color:#333">Tan</div>
<div class="t" style="left:590px;top:211px;width:54px;text-align:center;font-size:13.5px;color:#333">#</div>
<div class="t" style="left:644px;top:211px;width:122px;text-align:center;font-size:13.5px;color:#333">Kliyan</div>
<div class="a" style="left:409px;top:233px;width:336px;height:35px;background:#daf0fe"></div>
<div class="a" style="left:442px;top:233px;width:303px;height:35px;background:#007fc1"></div>
<div class="a" style="left:442px;top:233px;width:303px;height:1px;background:repeating-linear-gradient(90deg,#f58a3a 0 1.6px,rgba(0,0,0,0) 1.6px 4.8px)"></div>
<div class="a" style="left:442px;top:267px;width:303px;height:1px;background:repeating-linear-gradient(90deg,#f58a3a 0 1.6px,rgba(0,0,0,0) 1.6px 4.8px)"></div>
<div class="a" style="left:442px;top:233px;width:1px;height:35px;background:repeating-linear-gradient(180deg,#f58a3a 0 1.6px,rgba(0,0,0,0) 1.6px 4.8px)"></div>
<div class="t" style="left:442.5px;top:236px;font-size:13.8px;color:#12e0f8">23.08.2024</div>
<div class="t" style="left:645px;top:236px;font-size:13.8px;color:#12e0f8">Vandredi</div>
<svg style="left:416.3px;top:241.3px" width="18.4" height="18.4" viewBox="-9.2 -9.2 18.4 18.4"><circle cx="0" cy="0" r="7.2" fill="none" stroke="#4e585e" stroke-width="1.6"/><path d="M-3.02 -3.02L1.94 1.94M2.16 -2.88V2.45H-3.02" fill="none" stroke="#4e585e" stroke-width="1.84"/></svg>
<div class="a" style="left:409px;top:268px;width:336px;height:20px;background:#def9e1"></div>
<div class="t" style="left:542px;top:270px;font-size:13.6px;color:#333">10:00</div>
<div class="a" style="left:409px;top:288px;width:336px;height:20px;background:#daf0fe"></div>
<div class="t" style="left:542px;top:290px;font-size:13.6px;color:#333">10:30</div>
<div class="a" style="left:409px;top:308px;width:336px;height:20px;background:#def9e1"></div>
<div class="a" style="left:541px;top:308px;width:204px;height:20px;background:#fffdc2"></div>
<div class="t" style="left:591.5px;top:310px;font-size:13.6px;color:#1a1a1a">333333</div>
<div class="t" style="left:645px;top:310px;font-size:13.6px;color:#1a1a1a">Mercedes</div>
<div class="t" style="left:542px;top:310px;font-size:13.6px;color:#1a1a1a">11:00</div>
<div class="a" style="left:409px;top:328px;width:336px;height:20px;background:#daf0fe"></div>
<div class="t" style="left:542px;top:330px;font-size:13.6px;color:#333">11:30</div>
<div class="a" style="left:409px;top:348px;width:336px;height:20px;background:#def9e1"></div>
<div class="t" style="left:542px;top:350px;font-size:13.6px;color:#333">12:00</div>
<div class="a" style="left:409px;top:368px;width:336px;height:20px;background:#daf0fe"></div>
<div class="t" style="left:542px;top:370px;font-size:13.6px;color:#333">12:30</div>
<div class="a" style="left:409px;top:388px;width:336px;height:20px;background:#def9e1"></div>
<div class="t" style="left:542px;top:390px;font-size:13.6px;color:#333">13:00</div>
<div class="a" style="left:409px;top:408px;width:336px;height:20px;background:#daf0fe"></div>
<div class="t" style="left:542px;top:410px;font-size:13.6px;color:#333">13:30</div>
<div class="a" style="left:409px;top:428px;width:336px;height:20px;background:#def9e1"></div>
<div class="t" style="left:542px;top:430px;font-size:13.6px;color:#333">14:00</div>
<div class="a" style="left:409px;top:448px;width:336px;height:20px;background:#daf0fe"></div>
<div class="t" style="left:542px;top:450px;font-size:13.6px;color:#333">14:30</div>
<div class="a" style="left:409px;top:468px;width:336px;height:20px;background:#def9e1"></div>
<div class="t" style="left:542px;top:470px;font-size:13.6px;color:#333">15:00</div>
<div class="a" style="left:409px;top:488px;width:336px;height:20px;background:#daf0fe"></div>
<div class="t" style="left:542px;top:490px;font-size:13.6px;color:#333">15:30</div>
<div class="a" style="left:409px;top:508px;width:336px;height:20px;background:#def9e1"></div>
<div class="t" style="left:542px;top:510px;font-size:13.6px;color:#333">16:00</div>
<div class="a" style="left:409px;top:528px;width:336px;height:20px;background:#daf0fe"></div>
<div class="t" style="left:542px;top:530px;font-size:13.6px;color:#333">16:30</div>
<div class="a" style="left:409px;top:548px;width:336px;height:20px;background:#def9e1"></div>
<div class="a" style="left:541px;top:548px;width:204px;height:20px;background:#fffdc2"></div>
<div class="t" style="left:591.5px;top:550px;font-size:13.6px;color:#1a1a1a">123456</div>
<div class="t" style="left:645px;top:550px;font-size:13.6px;color:#1a1a1a">Toyota camry</div>
<div class="t" style="left:542px;top:550px;font-size:13.6px;color:#1a1a1a">17:00</div>
<div class="a" style="left:409px;top:568px;width:336px;height:20px;background:#daf0fe"></div>
<div class="t" style="left:542px;top:570px;font-size:13.6px;color:#333">17:30</div>
<div class="a" style="left:409px;top:588px;width:336px;height:20px;background:#def9e1"></div>
<div class="t" style="left:542px;top:590px;font-size:13.6px;color:#333">18:00</div>
<div class="a" style="left:409px;top:608px;width:336px;height:20px;background:#daf0fe"></div>
<div class="t" style="left:542px;top:610px;font-size:13.6px;color:#333">18:30</div>
<div class="a" style="left:409px;top:628px;width:336px;height:20px;background:#def9e1"></div>
<div class="t" style="left:542px;top:630px;font-size:13.6px;color:#333">19:00</div>
<div class="a" style="left:409px;top:648px;width:336px;height:20px;background:#daf0fe"></div>
<div class="t" style="left:542px;top:650px;font-size:13.6px;color:#333">19:30</div>
<div class="a" style="left:409px;top:668px;width:336px;height:34px;background:#def9e1"></div>
<div class="a" style="left:442px;top:668px;width:303px;height:34px;background:#007fc1"></div>
<div class="t" style="left:442.5px;top:671px;font-size:13.8px;color:#ffffff">24.08.2024</div>
<div class="t" style="left:645px;top:671px;font-size:13.8px;color:#ffffff">Samdi</div>
<svg style="left:416.3px;top:676.3px" width="18.4" height="18.4" viewBox="-9.2 -9.2 18.4 18.4"><circle cx="0" cy="0" r="7.2" fill="none" stroke="#4e585e" stroke-width="1.6"/><path d="M-3.02 -3.02L1.94 1.94M2.16 -2.88V2.45H-3.02" fill="none" stroke="#4e585e" stroke-width="1.84"/></svg>
<div class="a" style="left:409px;top:702px;width:336px;height:20px;background:#daf0fe"></div>
<div class="t" style="left:542px;top:704px;font-size:13.6px;color:#333">10:00</div>
<div class="a" style="left:409px;top:722px;width:336px;height:20px;background:#def9e1"></div>
<div class="t" style="left:542px;top:724px;font-size:13.6px;color:#333">10:30</div>
<div class="a" style="left:409px;top:742px;width:336px;height:20px;background:#daf0fe"></div>
<div class="t" style="left:542px;top:744px;font-size:13.6px;color:#333">11:00</div>
<div class="a" style="left:409px;top:762px;width:336px;height:20px;background:#def9e1"></div>
<div class="t" style="left:542px;top:764px;font-size:13.6px;color:#333">11:30</div>
<div class="a" style="left:409px;top:782px;width:336px;height:20px;background:#daf0fe"></div>
<div class="t" style="left:542px;top:784px;font-size:13.6px;color:#333">12:00</div>
<div class="a" style="left:409px;top:802px;width:336px;height:20px;background:#def9e1"></div>
<div class="t" style="left:542px;top:804px;font-size:13.6px;color:#333">12:30</div>
<div class="a" style="left:409px;top:822px;width:336px;height:20px;background:#daf0fe"></div>
<div class="t" style="left:542px;top:824px;font-size:13.6px;color:#333">13:00</div>
<div class="a" style="left:409px;top:842px;width:336px;height:20px;background:#def9e1"></div>
<div class="t" style="left:542px;top:844px;font-size:13.6px;color:#333">13:30</div>
<div class="a" style="left:409px;top:862px;width:336px;height:20px;background:#daf0fe"></div>
<div class="t" style="left:542px;top:864px;font-size:13.6px;color:#333">14:00</div>
<svg style="left:499.5px;top:310px" width="14" height="14" viewBox="0 0 14 14"><path d="M7 1.8V12.4" stroke="#f6a020" stroke-width="1.2"/><path d="M3 3.4L11 10.6M11 3.4L3 10.6" stroke="#f79a1a" stroke-width="3" stroke-linecap="round"/><path d="M3.6 4L10.4 10M10.4 4L3.6 10" stroke="#ffd820" stroke-width="1.3" stroke-linecap="round"/><circle cx="7" cy="7" r="1.9" fill="#fff030"/></svg>
<svg style="left:520.5px;top:312.3px" width="11" height="11" viewBox="0 0 11 11"><path d="M0.6 4.8L2.5 3.6L4 6.3L8.2 0.5L9.6 1.8L4.3 9.6Z" fill="#111" stroke="#111" stroke-width="0.7" stroke-linejoin="round"/></svg>
<svg style="left:520.5px;top:552.3px" width="11" height="11" viewBox="0 0 11 11"><path d="M0.6 4.8L2.5 3.6L4 6.3L8.2 0.5L9.6 1.8L4.3 9.6Z" fill="#111" stroke="#111" stroke-width="0.7" stroke-linejoin="round"/></svg>
<div class="a" style="left:745px;top:168px;width:1px;height:706px;background:#b0b0b0"></div>
<div class="a" style="left:746px;top:168px;width:20px;height:706px;background:#fff"></div>
<div class="a" style="left:766px;top:166px;width:1px;height:709px;background:#d0d0d0"></div>
<svg style="left:752.5px;top:175px" width="7" height="4" viewBox="0 0 7 4"><path d="M0 4H7L3.5 0Z" fill="#909090"/></svg>
<div class="a" style="left:751px;top:187px;width:10px;height:491px;background:#b8b8b8"></div>
<svg style="left:752.5px;top:861px" width="7" height="4" viewBox="0 0 7 4"><path d="M0 0H7L3.5 4Z" fill="#909090"/></svg>
<div class="a" style="left:407px;top:874px;width:361px;height:31px;background:#f0f0f0"></div>
<div class="a" style="left:407px;top:874px;width:360px;height:1px;background:#bcbcbc"></div>
<div class="a" style="left:775px;top:166px;width:360px;height:709px;border:2px solid #bcbcbc;border-right:none;border-bottom:1px solid #bcbcbc;background:#fff"></div>
<div class="a" style="left:777px;top:168px;width:335px;height:31px;background:#f5f5f5"></div>
<div class="a" style="left:777px;top:199px;width:335px;height:1px;background:#b4b4b4"></div>
<div class="t" style="left:777px;top:177px;width:357px;text-align:center;font-size:13.5px;color:#333">2. Anplwaye 2 (Main)</div>
<div class="a" style="left:777px;top:200px;width:335px;height:32px;background:#f5f5f5"></div>
<div class="a" style="left:777px;top:232px;width:335px;height:1px;background:#b4b4b4"></div>
<div class="a" style="left:908px;top:200px;width:1px;height:32px;background:#c8c8c8"></div>
<div class="a" style="left:958px;top:200px;width:1px;height:32px;background:#c8c8c8"></div>
<div class="a" style="left:1011px;top:200px;width:1px;height:32px;background:#c8c8c8"></div>
<div class="t" style="left:818px;top:211px;font-size:13.5px;color:#333">Dat</div>
<svg style="left:887px;top:215px" width="11" height="6" viewBox="0 0 11 6"><path d="M0 6H11L5.5 0Z" fill="#6a6a6a"/></svg>
<div class="t" style="left:908px;top:211px;width:50px;text-align:center;font-size:13.5px;color:#333">Tan</div>
<div class="t" style="left:958px;top:211px;width:53px;text-align:center;font-size:13.5px;color:#333">#</div>
<div class="t" style="left:1011px;top:211px;width:123px;text-align:center;font-size:13.5px;color:#333">Kliyan</div>
<div class="a" style="left:777px;top:233px;width:335px;height:35px;background:#daf0fe"></div>
<div class="a" style="left:810px;top:233px;width:302px;height:35px;background:#007fc1"></div>
<div class="t" style="left:810.5px;top:236px;font-size:13.8px;color:#12e0f8">23.08.2024</div>
<div class="t" style="left:1012px;top:236px;font-size:13.8px;color:#12e0f8">Vandredi</div>
<svg style="left:784.3px;top:241.3px" width="18.4" height="18.4" viewBox="-9.2 -9.2 18.4 18.4"><circle cx="0" cy="0" r="7.2" fill="none" stroke="#4e585e" stroke-width="1.6"/><path d="M-3.02 -3.02L1.94 1.94M2.16 -2.88V2.45H-3.02" fill="none" stroke="#4e585e" stroke-width="1.84"/></svg>
<div class="a" style="left:777px;top:268px;width:335px;height:20px;background:#def9e1"></div>
<div class="t" style="left:910px;top:270px;font-size:13.6px;color:#333">10:00</div>
<div class="a" style="left:777px;top:288px;width:335px;height:20px;background:#daf0fe"></div>
<div class="t" style="left:910px;top:290px;font-size:13.6px;color:#333">10:30</div>
<div class="a" style="left:777px;top:308px;width:335px;height:20px;background:#def9e1"></div>
<div class="t" style="left:910px;top:310px;font-size:13.6px;color:#333">11:00</div>
<div class="a" style="left:777px;top:328px;width:335px;height:20px;background:#daf0fe"></div>
<div class="t" style="left:910px;top:330px;font-size:13.6px;color:#333">11:30</div>
<div class="a" style="left:777px;top:348px;width:335px;height:20px;background:#def9e1"></div>
<div class="t" style="left:910px;top:350px;font-size:13.6px;color:#333">12:00</div>
<div class="a" style="left:777px;top:368px;width:335px;height:20px;background:#daf0fe"></div>
<div class="t" style="left:910px;top:370px;font-size:13.6px;color:#333">12:30</div>
<div class="a" style="left:777px;top:388px;width:335px;height:20px;background:#def9e1"></div>
<div class="t" style="left:910px;top:390px;font-size:13.6px;color:#333">13:00</div>
<div class="a" style="left:777px;top:408px;width:335px;height:20px;background:#daf0fe"></div>
<div class="t" style="left:910px;top:410px;font-size:13.6px;color:#333">13:30</div>
<div class="a" style="left:777px;top:428px;width:335px;height:20px;background:#def9e1"></div>
<div class="t" style="left:910px;top:430px;font-size:13.6px;color:#333">14:00</div>
<div class="a" style="left:777px;top:448px;width:335px;height:20px;background:#daf0fe"></div>
<div class="a" style="left:909px;top:448px;width:203px;height:20px;background:#fffdc2"></div>
<div class="t" style="left:959.5px;top:450px;font-size:13.6px;color:#1a1a1a">777777</div>
<div class="t" style="left:1012px;top:450px;font-size:13.6px;color:#1a1a1a">BMW</div>
<div class="t" style="left:910px;top:450px;font-size:13.6px;color:#1a1a1a">14:30</div>
<div class="a" style="left:777px;top:468px;width:335px;height:20px;background:#def9e1"></div>
<div class="t" style="left:910px;top:470px;font-size:13.6px;color:#333">15:00</div>
<div class="a" style="left:777px;top:488px;width:335px;height:20px;background:#daf0fe"></div>
<div class="t" style="left:910px;top:490px;font-size:13.6px;color:#333">15:30</div>
<div class="a" style="left:777px;top:508px;width:335px;height:20px;background:#def9e1"></div>
<div class="t" style="left:910px;top:510px;font-size:13.6px;color:#333">16:00</div>
<div class="a" style="left:777px;top:528px;width:335px;height:20px;background:#daf0fe"></div>
<div class="t" style="left:910px;top:530px;font-size:13.6px;color:#333">16:30</div>
<div class="a" style="left:777px;top:548px;width:335px;height:20px;background:#def9e1"></div>
<div class="t" style="left:910px;top:550px;font-size:13.6px;color:#333">17:00</div>
<div class="a" style="left:777px;top:568px;width:335px;height:20px;background:#daf0fe"></div>
<div class="t" style="left:910px;top:570px;font-size:13.6px;color:#333">17:30</div>
<div class="a" style="left:777px;top:588px;width:335px;height:20px;background:#def9e1"></div>
<div class="t" style="left:910px;top:590px;font-size:13.6px;color:#333">18:00</div>
<div class="a" style="left:777px;top:608px;width:335px;height:20px;background:#daf0fe"></div>
<div class="t" style="left:910px;top:610px;font-size:13.6px;color:#333">18:30</div>
<div class="a" style="left:777px;top:628px;width:335px;height:20px;background:#def9e1"></div>
<div class="t" style="left:910px;top:630px;font-size:13.6px;color:#333">19:00</div>
<div class="a" style="left:777px;top:648px;width:335px;height:20px;background:#daf0fe"></div>
<div class="t" style="left:910px;top:650px;font-size:13.6px;color:#333">19:30</div>
<div class="a" style="left:777px;top:668px;width:335px;height:34px;background:#def9e1"></div>
<div class="a" style="left:810px;top:668px;width:302px;height:34px;background:#007fc1"></div>
<div class="t" style="left:810.5px;top:671px;font-size:13.8px;color:#ffffff">24.08.2024</div>
<div class="t" style="left:1012px;top:671px;font-size:13.8px;color:#ffffff">Samdi</div>
<svg style="left:784.3px;top:676.3px" width="18.4" height="18.4" viewBox="-9.2 -9.2 18.4 18.4"><circle cx="0" cy="0" r="7.2" fill="none" stroke="#4e585e" stroke-width="1.6"/><path d="M-3.02 -3.02L1.94 1.94M2.16 -2.88V2.45H-3.02" fill="none" stroke="#4e585e" stroke-width="1.84"/></svg>
<div class="a" style="left:777px;top:702px;width:335px;height:20px;background:#daf0fe"></div>
<div class="t" style="left:910px;top:704px;font-size:13.6px;color:#333">10:00</div>
<div class="a" style="left:777px;top:722px;width:335px;height:20px;background:#def9e1"></div>
<div class="t" style="left:910px;top:724px;font-size:13.6px;color:#333">10:30</div>
<div class="a" style="left:777px;top:742px;width:335px;height:20px;background:#daf0fe"></div>
<div class="t" style="left:910px;top:744px;font-size:13.6px;color:#333">11:00</div>
<div class="a" style="left:777px;top:762px;width:335px;height:20px;background:#def9e1"></div>
<div class="t" style="left:910px;top:764px;font-size:13.6px;color:#333">11:30</div>
<div class="a" style="left:777px;top:782px;width:335px;height:20px;background:#daf0fe"></div>
<div class="a" style="left:909px;top:782px;width:203px;height:20px;background:#fffdc2"></div>
<div class="t" style="left:959.5px;top:784px;font-size:13.6px;color:#c02828">111111</div>
<div class="t" style="left:1012px;top:784px;font-size:13.6px;color:#c02828">BMW</div>
<div class="t" style="left:910px;top:784px;font-size:13.6px;color:#c02828">12:00</div>
<div class="a" style="left:777px;top:802px;width:335px;height:20px;background:#def9e1"></div>
<div class="t" style="left:910px;top:804px;font-size:13.6px;color:#333">12:30</div>
<div class="a" style="left:777px;top:822px;width:335px;height:20px;background:#daf0fe"></div>
<div class="t" style="left:910px;top:824px;font-size:13.6px;color:#333">13:00</div>
<div class="a" style="left:777px;top:842px;width:335px;height:20px;background:#def9e1"></div>
<div class="t" style="left:910px;top:844px;font-size:13.6px;color:#333">13:30</div>
<div class="a" style="left:777px;top:862px;width:335px;height:20px;background:#daf0fe"></div>
<div class="t" style="left:910px;top:864px;font-size:13.6px;color:#333">14:00</div>
<svg style="left:888.5px;top:452.3px" width="11" height="11" viewBox="0 0 11 11"><path d="M0.6 4.8L2.5 3.6L4 6.3L8.2 0.5L9.6 1.8L4.3 9.6Z" fill="#111" stroke="#111" stroke-width="0.7" stroke-linejoin="round"/></svg>
<svg style="left:844px;top:783px" width="20" height="20" viewBox="0 0 20 20"><path d="M3.5 3Q1 6 4 11Q8 16.5 13.5 18Q16.5 18.5 17.5 16.5" fill="none" stroke="#151515" stroke-width="3.2" stroke-linecap="round"/><path d="M3 2.8L6.5 7" stroke="#e8483a" stroke-width="3.4" stroke-linecap="round"/><path d="M12.8 14.5L17.3 16.8" stroke="#e8483a" stroke-width="3.4" stroke-linecap="round"/></svg>
<svg style="left:867px;top:785px" width="14" height="14" viewBox="0 0 14 14"><path d="M7 1.8V12.4" stroke="#f6a020" stroke-width="1.2"/><path d="M3 3.4L11 10.6M11 3.4L3 10.6" stroke="#f79a1a" stroke-width="3" stroke-linecap="round"/><path d="M3.6 4L10.4 10M10.4 4L3.6 10" stroke="#ffd820" stroke-width="1.3" stroke-linecap="round"/><circle cx="7" cy="7" r="1.9" fill="#fff030"/></svg>
<div class="a" style="left:1112px;top:168px;width:1px;height:706px;background:#b0b0b0"></div>
<div class="a" style="left:1113px;top:168px;width:21px;height:706px;background:#fff"></div>
<div class="a" style="left:1134px;top:166px;width:1px;height:709px;background:#d0d0d0"></div>
<svg style="left:1120.5px;top:175px" width="7" height="4" viewBox="0 0 7 4"><path d="M0 4H7L3.5 0Z" fill="#909090"/></svg>
<div class="a" style="left:1119px;top:187px;width:10px;height:491px;background:#b8b8b8"></div>
<svg style="left:1120.5px;top:861px" width="7" height="4" viewBox="0 0 7 4"><path d="M0 0H7L3.5 4Z" fill="#909090"/></svg>
<div class="a" style="left:775px;top:874px;width:361px;height:31px;background:#f0f0f0"></div>
<div class="a" style="left:775px;top:874px;width:360px;height:1px;background:#bcbcbc"></div>
<div class="a" style="left:1142px;top:166px;width:360px;height:709px;border:2px solid #bcbcbc;border-right:none;border-bottom:1px solid #bcbcbc;background:#fff"></div>
<div class="a" style="left:1144px;top:168px;width:336px;height:31px;background:#f5f5f5"></div>
<div class="a" style="left:1144px;top:199px;width:336px;height:1px;background:#b4b4b4"></div>
<div class="t" style="left:1144px;top:177px;width:357px;text-align:center;font-size:13.5px;color:#333">3. Anplwaye 3 (Main)</div>
<div class="a" style="left:1144px;top:200px;width:336px;height:32px;background:#f5f5f5"></div>
<div class="a" style="left:1144px;top:232px;width:336px;height:1px;background:#b4b4b4"></div>
<div class="a" style="left:1275px;top:200px;width:1px;height:32px;background:#c8c8c8"></div>
<div class="a" style="left:1325px;top:200px;width:1px;height:32px;background:#c8c8c8"></div>
<div class="a" style="left:1379px;top:200px;width:1px;height:32px;background:#c8c8c8"></div>
<div class="t" style="left:1185px;top:211px;font-size:13.5px;color:#333">Dat</div>
<svg style="left:1254px;top:215px" width="11" height="6" viewBox="0 0 11 6"><path d="M0 6H11L5.5 0Z" fill="#6a6a6a"/></svg>
<div class="t" style="left:1275px;top:211px;width:50px;text-align:center;font-size:13.5px;color:#333">Tan</div>
<div class="t" style="left:1325px;top:211px;width:54px;text-align:center;font-size:13.5px;color:#333">#</div>
<div class="t" style="left:1379px;top:211px;width:122px;text-align:center;font-size:13.5px;color:#333">Kliyan</div>
<div class="a" style="left:1144px;top:233px;width:336px;height:35px;background:#daf0fe"></div>
<div class="a" style="left:1177px;top:233px;width:303px;height:35px;background:#007fc1"></div>
<div class="t" style="left:1177.5px;top:236px;font-size:13.8px;color:#12e0f8">23.08.2024</div>
<div class="t" style="left:1380px;top:236px;font-size:13.8px;color:#12e0f8">Vandredi</div>
<svg style="left:1151.3px;top:241.3px" width="18.4" height="18.4" viewBox="-9.2 -9.2 18.4 18.4"><circle cx="0" cy="0" r="7.2" fill="none" stroke="#4e585e" stroke-width="1.6"/><path d="M-3.02 -3.02L1.94 1.94M2.16 -2.88V2.45H-3.02" fill="none" stroke="#4e585e" stroke-width="1.84"/></svg>
<div class="a" style="left:1144px;top:268px;width:336px;height:20px;background:#def9e1"></div>
<div class="t" style="left:1277px;top:270px;font-size:13.6px;color:#333">10:00</div>
<div class="a" style="left:1144px;top:288px;width:336px;height:20px;background:#daf0fe"></div>
<div class="t" style="left:1277px;top:290px;font-size:13.6px;color:#333">10:30</div>
<div class="a" style="left:1144px;top:308px;width:336px;height:20px;background:#def9e1"></div>
<div class="t" style="left:1277px;top:310px;font-size:13.6px;color:#333">11:00</div>
<div class="a" style="left:1144px;top:328px;width:336px;height:20px;background:#daf0fe"></div>
<div class="a" style="left:1276px;top:328px;width:204px;height:20px;background:#fffdc2"></div>
<div class="t" style="left:1326.5px;top:330px;font-size:13.6px;color:#1a1a1a">123456</div>
<div class="t" style="left:1380px;top:330px;font-size:13.6px;color:#1a1a1a">Toyota camry</div>
<div class="t" style="left:1277px;top:330px;font-size:13.6px;color:#1a1a1a">11:30</div>
<div class="a" style="left:1144px;top:348px;width:336px;height:20px;background:#def9e1"></div>
<div class="t" style="left:1277px;top:350px;font-size:13.6px;color:#333">12:00</div>
<div class="a" style="left:1144px;top:368px;width:336px;height:20px;background:#daf0fe"></div>
<div class="a" style="left:1276px;top:368px;width:204px;height:20px;background:#fffdc2"></div>
<div class="t" style="left:1326.5px;top:370px;font-size:13.6px;color:#1a1a1a">333333</div>
<div class="t" style="left:1380px;top:370px;font-size:13.6px;color:#1a1a1a">Mercedes</div>
<div class="t" style="left:1277px;top:370px;font-size:13.6px;color:#1a1a1a">12:30</div>
<div class="a" style="left:1144px;top:388px;width:336px;height:20px;background:#def9e1"></div>
<div class="t" style="left:1277px;top:390px;font-size:13.6px;color:#333">13:00</div>
<div class="a" style="left:1144px;top:408px;width:336px;height:20px;background:#daf0fe"></div>
<div class="t" style="left:1277px;top:410px;font-size:13.6px;color:#333">13:30</div>
<div class="a" style="left:1144px;top:428px;width:336px;height:20px;background:#def9e1"></div>
<div class="t" style="left:1277px;top:430px;font-size:13.6px;color:#333">14:00</div>
<div class="a" style="left:1144px;top:448px;width:336px;height:20px;background:#daf0fe"></div>
<div class="t" style="left:1277px;top:450px;font-size:13.6px;color:#333">14:30</div>
<div class="a" style="left:1144px;top:468px;width:336px;height:20px;background:#def9e1"></div>
<div class="t" style="left:1277px;top:470px;font-size:13.6px;color:#333">15:00</div>
<div class="a" style="left:1144px;top:488px;width:336px;height:20px;background:#daf0fe"></div>
<div class="t" style="left:1277px;top:490px;font-size:13.6px;color:#333">15:30</div>
<div class="a" style="left:1144px;top:508px;width:336px;height:20px;background:#def9e1"></div>
<div class="t" style="left:1277px;top:510px;font-size:13.6px;color:#333">16:00</div>
<div class="a" style="left:1144px;top:528px;width:336px;height:20px;background:#daf0fe"></div>
<div class="t" style="left:1277px;top:530px;font-size:13.6px;color:#333">16:30</div>
<div class="a" style="left:1144px;top:548px;width:336px;height:20px;background:#def9e1"></div>
<div class="t" style="left:1277px;top:550px;font-size:13.6px;color:#333">17:00</div>
<div class="a" style="left:1144px;top:568px;width:336px;height:20px;background:#daf0fe"></div>
<div class="t" style="left:1277px;top:570px;font-size:13.6px;color:#333">17:30</div>
<div class="a" style="left:1144px;top:588px;width:336px;height:20px;background:#def9e1"></div>
<div class="t" style="left:1277px;top:590px;font-size:13.6px;color:#333">18:00</div>
<div class="a" style="left:1144px;top:608px;width:336px;height:20px;background:#daf0fe"></div>
<div class="t" style="left:1277px;top:610px;font-size:13.6px;color:#333">18:30</div>
<div class="a" style="left:1144px;top:628px;width:336px;height:20px;background:#def9e1"></div>
<div class="t" style="left:1277px;top:630px;font-size:13.6px;color:#333">19:00</div>
<div class="a" style="left:1144px;top:648px;width:336px;height:20px;background:#daf0fe"></div>
<div class="t" style="left:1277px;top:650px;font-size:13.6px;color:#333">19:30</div>
<div class="a" style="left:1144px;top:668px;width:336px;height:34px;background:#def9e1"></div>
<div class="a" style="left:1177px;top:668px;width:303px;height:34px;background:#007fc1"></div>
<div class="t" style="left:1177.5px;top:671px;font-size:13.8px;color:#ffffff">24.08.2024</div>
<div class="t" style="left:1380px;top:671px;font-size:13.8px;color:#ffffff">Samdi</div>
<svg style="left:1151.3px;top:676.3px" width="18.4" height="18.4" viewBox="-9.2 -9.2 18.4 18.4"><circle cx="0" cy="0" r="7.2" fill="none" stroke="#4e585e" stroke-width="1.6"/><path d="M-3.02 -3.02L1.94 1.94M2.16 -2.88V2.45H-3.02" fill="none" stroke="#4e585e" stroke-width="1.84"/></svg>
<div class="a" style="left:1144px;top:702px;width:336px;height:20px;background:#daf0fe"></div>
<div class="t" style="left:1277px;top:704px;font-size:13.6px;color:#333">10:00</div>
<div class="a" style="left:1144px;top:722px;width:336px;height:20px;background:#def9e1"></div>
<div class="t" style="left:1277px;top:724px;font-size:13.6px;color:#333">10:30</div>
<div class="a" style="left:1144px;top:742px;width:336px;height:20px;background:#daf0fe"></div>
<div class="t" style="left:1277px;top:744px;font-size:13.6px;color:#333">11:00</div>
<div class="a" style="left:1144px;top:762px;width:336px;height:20px;background:#def9e1"></div>
<div class="t" style="left:1277px;top:764px;font-size:13.6px;color:#333">11:30</div>
<div class="a" style="left:1144px;top:782px;width:336px;height:20px;background:#daf0fe"></div>
<div class="t" style="left:1277px;top:784px;font-size:13.6px;color:#333">12:00</div>
<div class="a" style="left:1144px;top:802px;width:336px;height:20px;background:#def9e1"></div>
<div class="t" style="left:1277px;top:804px;font-size:13.6px;color:#333">12:30</div>
<div class="a" style="left:1144px;top:822px;width:336px;height:20px;background:#daf0fe"></div>
<div class="t" style="left:1277px;top:824px;font-size:13.6px;color:#333">13:00</div>
<div class="a" style="left:1144px;top:842px;width:336px;height:20px;background:#def9e1"></div>
<div class="t" style="left:1277px;top:844px;font-size:13.6px;color:#333">13:30</div>
<div class="a" style="left:1144px;top:862px;width:336px;height:20px;background:#daf0fe"></div>
<div class="t" style="left:1277px;top:864px;font-size:13.6px;color:#333">14:00</div>
<svg style="left:1230px;top:330.5px" width="20" height="14" viewBox="0 0 20 14"><path d="M1 7.5Q10 -1.5 19 7.5Q10 15.5 1 7.5Z" fill="#fff" stroke="#7880c0" stroke-width="1.2"/><circle cx="10" cy="7.3" r="4.3" fill="#7088a8"/><circle cx="10" cy="7" r="1.4" fill="#2a3a58"/><path d="M1.8 6.8Q10 -1 18.2 6.8" fill="none" stroke="#c87a40" stroke-width="2.2"/></svg>
<svg style="left:1255.5px;top:332.3px" width="11" height="11" viewBox="0 0 11 11"><path d="M0.6 4.8L2.5 3.6L4 6.3L8.2 0.5L9.6 1.8L4.3 9.6Z" fill="#111" stroke="#111" stroke-width="0.7" stroke-linejoin="round"/></svg>
<svg style="left:1255.5px;top:372.3px" width="11" height="11" viewBox="0 0 11 11"><path d="M0.6 4.8L2.5 3.6L4 6.3L8.2 0.5L9.6 1.8L4.3 9.6Z" fill="#111" stroke="#111" stroke-width="0.7" stroke-linejoin="round"/></svg>
<div class="a" style="left:1480px;top:168px;width:1px;height:706px;background:#b0b0b0"></div>
<div class="a" style="left:1481px;top:168px;width:20px;height:706px;background:#fff"></div>
<div class="a" style="left:1501px;top:166px;width:1px;height:709px;background:#d0d0d0"></div>
<svg style="left:1487.5px;top:175px" width="7" height="4" viewBox="0 0 7 4"><path d="M0 4H7L3.5 0Z" fill="#909090"/></svg>
<div class="a" style="left:1486px;top:187px;width:10px;height:491px;background:#b8b8b8"></div>
<svg style="left:1487.5px;top:861px" width="7" height="4" viewBox="0 0 7 4"><path d="M0 0H7L3.5 4Z" fill="#909090"/></svg>
<div class="a" style="left:1142px;top:874px;width:361px;height:31px;background:#f0f0f0"></div>
<div class="a" style="left:1142px;top:874px;width:360px;height:1px;background:#bcbcbc"></div>
<div class="a" style="left:22px;top:906px;width:183px;height:53px;border:1px solid #c8c8c8;border-bottom:none;background:#fff"></div>
<div class="a" style="left:22px;top:958px;width:183px;height:3px;background:#1ea0f0"></div>
<svg style="left:39px;top:921px" width="32" height="28" viewBox="0 0 32 28"><rect x="1" y="1" width="29" height="25" rx="2" fill="#e6ecf6" stroke="#7a8fb8" stroke-width="1.2"/><rect x="1.5" y="1.5" width="28" height="5" fill="#8fb2e0"/><circle cx="26" cy="4" r="1" fill="#e04040"/></svg>
<div class="t" style="left:82px;top:927px;font-size:13.6px;color:#1e90dc">Enskripsyon</div>
<svg style="left:172px;top:929px" width="12" height="10" viewBox="0 0 12 10"><path d="M1 1L11 9M11 1L1 9" stroke="#1e90dc" stroke-width="2.2"/></svg>
<svg style="left:28px;top:964px" width="21" height="21" viewBox="0 0 21 21"><circle cx="10.5" cy="10.5" r="10" fill="#4f84c0"/><circle cx="10.5" cy="5.5" r="1.6" fill="#fff"/><rect x="9" y="8.5" width="3" height="8" fill="#fff"/></svg>
<div class="t" style="left:70px;top:969px;font-size:13.4px;letter-spacing:0.35px;color:#333">7.2.9044.10 Standard</div>
<div class="a" style="left:229px;top:966px;width:1px;height:18px;background:#c0c0c0"></div>
<div class="a" style="left:399px;top:966px;width:1px;height:18px;background:#c0c0c0"></div>
<div class="a" style="left:577px;top:966px;width:1px;height:18px;background:#c0c0c0"></div>
<div class="a" style="left:726px;top:966px;width:1px;height:18px;background:#c0c0c0"></div>
<div class="a" style="left:875px;top:966px;width:1px;height:18px;background:#c0c0c0"></div>
<div class="a" style="left:1484px;top:966px;width:1px;height:18px;background:#c0c0c0"></div>
<svg style="left:243px;top:964px" width="16" height="19" viewBox="0 0 16 19"><defs><linearGradient id="gdb" x1="0" x2="1"><stop offset="0" stop-color="#e0a040"/><stop offset="0.45" stop-color="#fde6a8"/><stop offset="1" stop-color="#d08a30"/></linearGradient></defs><path d="M0.5 3V16Q0.5 18.5 8 18.5Q15.5 18.5 15.5 16V3Z" fill="url(#gdb)" stroke="#c07a28" stroke-width="0.8"/><ellipse cx="8" cy="3" rx="7.5" ry="2.5" fill="#fde0a0" stroke="#c07a28" stroke-width="0.8"/><path d="M0.5 8Q8 11 15.5 8M0.5 12.5Q8 15.5 15.5 12.5" fill="none" stroke="#c07a28" stroke-width="0.8"/></svg>
<div class="t" style="left:281.5px;top:969px;font-size:13.6px;letter-spacing:0.2px;color:#333">localhost (utf8)</div>
<svg style="left:411px;top:964px" width="19.0" height="19.0" viewBox="0 0 19.0 19.0"><g transform="scale(1.0)"><path d="M0.8 15Q0.8 11.3 9.2 11Q17.8 11.3 17.8 15Q17.8 18.4 9.3 18.4Q0.8 18.4 0.8 15Z" fill="url(#gshirt)" stroke="#5e8e2c" stroke-width="0.6"/><path d="M4.2 6.5Q4.2 0.8 9.2 0.8Q14.2 0.8 14.2 6.5V9Q12.5 11.2 9.2 11.2Q6 11.2 4.2 9Z" fill="url(#ghair)"/><path d="M5.8 5.6Q9.2 3.6 12.6 5.6V9.4Q11.6 12 9.2 12Q6.8 12 5.8 9.4Z" fill="url(#gskin)"/></g></svg>
<div class="t" style="left:451px;top:969px;font-size:13px;color:#333">NIKOLAY (MAIN)</div>
<svg style="left:591px;top:965px" width="18" height="18" viewBox="0 0 18 18"><rect x="0.5" y="0.5" width="17" height="17" fill="#f4f6fb" stroke="#7a8fb8"/><rect x="0.5" y="0.5" width="17" height="4" fill="#e05a50"/><text x="9" y="15" font-size="10" font-weight="bold" text-anchor="middle" fill="#2a4070" font-family="Liberation Serif">31</text></svg>
<div class="t" style="left:631px;top:969px;font-size:13.4px;letter-spacing:0.5px;color:#333">23.08.2024</div>
<div class="t" style="left:763px;top:969px;font-size:13.4px;letter-spacing:0.45px;color:#333">16:13:39:187</div>
<svg style="left:1508.5px;top:969.5px" width="4" height="4" viewBox="0 0 4 4"><path d="M2 0.3V3.7M0.3 2H3.7" stroke="#707070" stroke-width="1.2"/></svg>
<svg style="left:1503.0px;top:975.0px" width="4" height="4" viewBox="0 0 4 4"><path d="M2 0.3V3.7M0.3 2H3.7" stroke="#707070" stroke-width="1.2"/></svg>
<svg style="left:1508.5px;top:975.0px" width="4" height="4" viewBox="0 0 4 4"><path d="M2 0.3V3.7M0.3 2H3.7" stroke="#707070" stroke-width="1.2"/></svg>
<svg style="left:1497.5px;top:980.5px" width="4" height="4" viewBox="0 0 4 4"><path d="M2 0.3V3.7M0.3 2H3.7" stroke="#707070" stroke-width="1.2"/></svg>
<svg style="left:1503.0px;top:980.5px" width="4" height="4" viewBox="0 0 4 4"><path d="M2 0.3V3.7M0.3 2H3.7" stroke="#707070" stroke-width="1.2"/></svg>
<svg style="left:1508.5px;top:980.5px" width="4" height="4" viewBox="0 0 4 4"><path d="M2 0.3V3.7M0.3 2H3.7" stroke="#707070" stroke-width="1.2"/></svg></body></html>
